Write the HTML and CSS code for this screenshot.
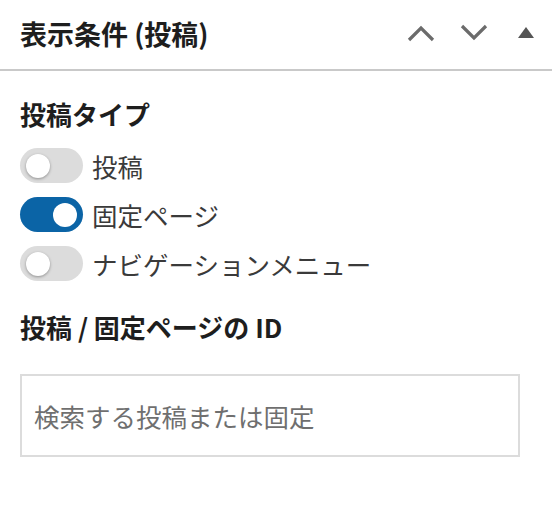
FILE: index.html
```html
<!DOCTYPE html>
<html lang="ja">
<head>
<meta charset="utf-8">
<link rel="stylesheet" href="styles.css">
</head>
<body>
<div class="panel">
  <div class="panel-header">
    <h2 class="panel-title">表示条件 (投稿)</h2>
    <div class="panel-actions">
      <button class="icon-btn" aria-label="上へ移動">
        <svg width="28" height="18" viewBox="0 0 28 18"><path d="M2 16 L14 4 L26 16" fill="none" stroke="#6b6b6b" stroke-width="3.2"/></svg>
      </button>
      <button class="icon-btn icon-btn-down" aria-label="下へ移動">
        <svg width="28" height="18" viewBox="0 0 28 18"><path d="M2 2 L14 14 L26 2" fill="none" stroke="#6b6b6b" stroke-width="3.2"/></svg>
      </button>
      <button class="icon-btn icon-btn-small" aria-label="パネルを切り替え">
        <svg width="16" height="11" viewBox="0 0 16 11"><path d="M8 0 L16 11 L0 11 Z" fill="#555"/></svg>
      </button>
    </div>
  </div>
  <div class="panel-body">
    <h3 class="section-title">投稿タイプ</h3>
    <div class="options">
      <label class="option"><span class="toggle"></span><span class="option-label">投稿</span></label>
      <label class="option"><span class="toggle is-on"></span><span class="option-label">固定ページ</span></label>
      <label class="option"><span class="toggle"></span><span class="option-label">ナビゲーションメニュー</span></label>
    </div>
    <h3 class="section-title section-title-id">投稿 / 固定ページの ID</h3>
    <div class="search-box"><span class="placeholder">検索する投稿または固定</span></div>
  </div>
</div>
</body>
</html>
```
FILE: styles.css
```css
html, body {
  margin: 0;
  padding: 0;
  background: #fff;
}
body {
  font-family: "Noto Sans CJK JP", sans-serif;
  color: #1e1e1e;
}
.panel {
  width: 552px;
}
.panel-header {
  display: flex;
  align-items: center;
  justify-content: space-between;
  padding: 0 10px 0 20px;
  border-bottom: 2px solid #c9c9c9;
  box-sizing: border-box;
  height: 71px;
}
.panel-title {
  margin: 0;
  font-size: 27px;
  font-weight: 700;
  line-height: 32px;
  color: #1e1e1e;
  padding-bottom: 2px;
}
.panel-actions {
  display: flex;
  align-items: center;
  gap: 25px;
  padding-bottom: 4px;
}
.icon-btn {
  border: 0;
  background: none;
  padding: 0;
  width: 28px;
  height: 28px;
  display: flex;
  align-items: center;
  justify-content: center;
}
.icon-btn-down {
  margin-right: 5px;
}
.icon-btn-small {
  width: 16px;
  margin-right: 8px;
}
.panel-body {
  padding: 0 20px;
}
.section-title {
  margin: 27px 0 18px;
  font-size: 26px;
  font-weight: 700;
  line-height: 32px;
  color: #1e1e1e;
}
.section-title-id {
  margin: 30px 0 31px;
}
.options {
  display: flex;
  flex-direction: column;
  gap: 14px;
}
.option {
  display: flex;
  align-items: center;
  gap: 9px;
  height: 35px;
}
.toggle {
  position: relative;
  width: 63px;
  height: 35px;
  border-radius: 18px;
  background: #dcdcdc;
  flex: none;
}
.toggle::after {
  content: "";
  position: absolute;
  top: 5.5px;
  left: 6px;
  width: 24px;
  height: 24px;
  border-radius: 50%;
  background: #fff;
  box-shadow: 0 1px 3px rgba(0, 0, 0, 0.35);
}
.toggle.is-on {
  background: #0b64a6;
}
.toggle.is-on::after {
  left: 33px;
  box-shadow: none;
}
.option-label {
  font-size: 25.5px;
  line-height: 32px;
  color: #3a3a3a;
}
.search-box {
  width: 500px;
  height: 83px;
  box-sizing: border-box;
  border: 2px solid #dcdcdc;
  display: flex;
  align-items: center;
  padding-left: 12px;
}
.placeholder {
  white-space: nowrap;
  font-size: 25.5px;
  line-height: 32px;
  color: #6f6f6f;
}
```
